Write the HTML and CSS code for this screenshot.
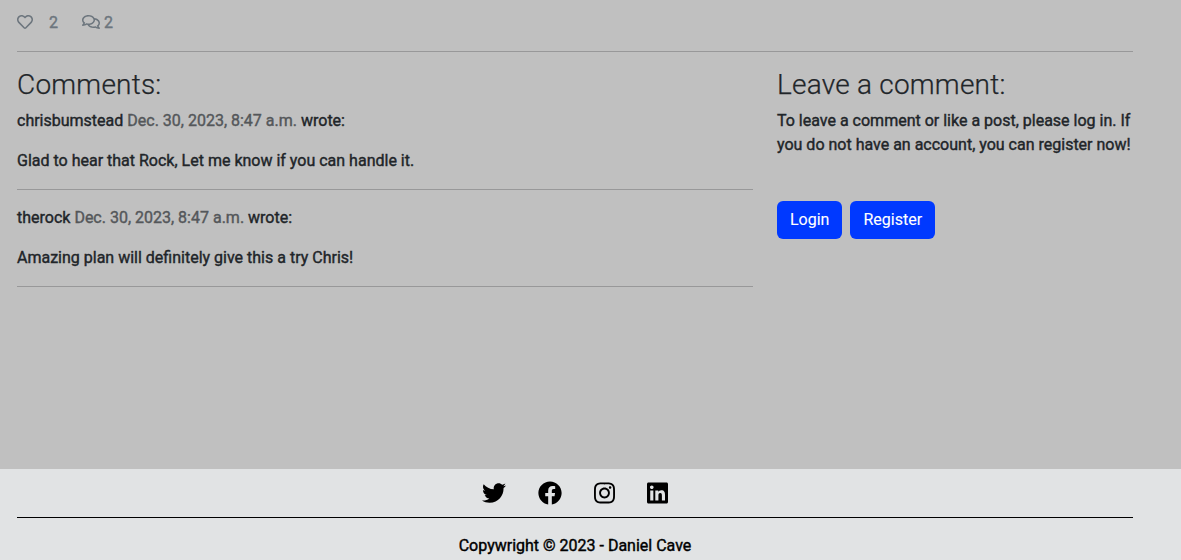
FILE: index.html
```html
<!DOCTYPE html>
<html lang="en">
<head>
<meta charset="utf-8">
<title>Post comments</title>
<link rel="stylesheet" href="styles.css">
</head>
<body>
<main class="content">
  <div class="stats">
    <svg class="icon-heart" viewBox="0 0 512 512"><path d="M458.400 64.300C400.600 15.700 311.300 23 256 79.300 200.700 23 111.400 15.600 53.600 64.300-21.600 127.600-10.600 230.800 43 285.500l175.400 178.700c10 10.200 23.400 15.900 37.600 15.900 14.300 0 27.600-5.600 37.600-15.800L469 285.600c53.500-54.700 64.700-157.900-10.600-221.300zm-23.600 187.500L259.400 430.500c-2.400 2.400-4.400 2.400-6.800 0L77.200 251.800c-36.500-37.200-43.900-107.600 7.300-150.700 38.900-32.700 98.900-27.800 136.500 10.500l35 35.700 35-35.700c37.800-38.500 97.800-43.200 136.500-10.600 51.100 43.100 43.500 113.900 7.300 150.800z"/></svg>
    <span class="count count-likes">2</span>
    <svg class="icon-comments" viewBox="0 0 576 512"><path d="M532 386.200c27.500-27.100 44-61.100 44-98.200 0-80-76.500-146.100-176.200-157.900C368.300 72.500 294.300 32 208 32 93.100 32 0 103.600 0 192c0 37 16.500 71 44 98.200-15.300 30.700-37.300 54.500-37.700 54.900-6.300 6.700-8.100 16.500-4.400 25 3.600 8.500 12 14 21.200 14 53.500 0 96.700-20.200 125.200-38.800 9.200 2.100 18.700 3.700 28.400 4.900C208.100 407.600 281.800 448 368 448c20.800 0 40.800-2.400 59.800-6.800C456.300 459.700 499.400 480 553 480c9.200 0 17.500-5.500 21.200-14 3.600-8.500 1.900-18.300-4.400-25-.4-.3-22.500-24.100-37.800-54.800zm-392.800-92.300L122.100 305c-14.100 9.100-28.500 16.300-43.100 21.400 2.700-4.700 5.400-9.700 8-14.800l15.500-31.100L77.700 256C64.200 242.600 48 220.700 48 192c0-60.700 73.300-112 160-112s160 51.300 160 112-73.300 112-160 112c-16.500 0-33-1.900-49-5.600l-19.800-4.500zM498.300 352l-24.700 24.400 15.500 31.100c2.600 5.100 5.300 10.100 8 14.800-14.600-5.100-29-12.300-43.100-21.400l-17.100-11.100-19.900 4.600c-16 3.700-32.500 5.600-49 5.600-54 0-102.200-20.100-131.300-49.700C338 339.500 416 272.900 416 192c0-3.400-.4-6.700-.7-10C479.700 196.500 528 238.800 528 288c0 28.700-16.200 50.600-29.700 64z"/></svg>
    <span class="count">2</span>
  </div>
  <div class="columns">
    <section>
      <h3>Comments:</h3>
      <article class="comment">
        <p>chrisbumstead <span class="date">Dec. 30, 2023, 8:47 a.m.</span> wrote:</p>
        <p>Glad to hear that Rock, Let me know if you can handle it.</p>
      </article>
      <article class="comment">
        <p>therock <span class="date">Dec. 30, 2023, 8:47 a.m.</span> wrote:</p>
        <p>Amazing plan will definitely give this a try Chris!</p>
      </article>
    </section>
    <section>
      <h3>Leave a comment:</h3>
      <p class="notice">To leave a comment or like a post, please log in. If you do not have an account, you can register now!</p>
      <div class="actions"><a class="btn">Login</a><a class="btn">Register</a></div>
    </section>
  </div>
</main>
<footer class="footer">
  <div class="social">
    <svg class="brand" viewBox="0 0 512 512"><path d="M459.370 151.716c.325 4.548.325 9.097.325 13.645 0 138.720-105.583 298.558-298.558 298.558-59.452 0-114.680-17.219-161.137-47.106 8.447.974 16.568 1.299 25.340 1.299 49.055 0 94.213-16.568 130.274-44.832-46.132-.975-84.792-31.188-98.112-72.772 6.498.974 12.995 1.624 19.818 1.624 9.421 0 18.843-1.300 27.614-3.573-48.081-9.747-84.143-51.980-84.143-102.985v-1.299c13.969 7.797 30.214 12.670 47.431 13.319-28.264-18.843-46.781-51.005-46.781-87.391 0-19.492 5.197-37.360 14.294-52.954 51.655 63.675 129.300 105.258 216.365 109.807-1.624-7.797-2.599-15.918-2.599-24.040 0-57.828 46.782-104.934 104.934-104.934 30.213 0 57.502 12.670 76.670 33.137 23.715-4.548 46.456-13.320 66.599-25.340-7.798 24.366-24.366 44.833-46.132 57.827 21.117-2.273 41.584-8.122 60.426-16.243-14.292 20.791-32.161 39.308-52.628 54.253z"/></svg>
    <svg class="brand" viewBox="0 0 512 512"><path d="M504 256C504 119 393 8 256 8S8 119 8 256c0 123.780 90.690 226.380 209.250 245V327.690h-63V256h63v-54.640c0-62.150 37-96.480 93.670-96.480 27.140 0 55.520 4.840 55.520 4.840v61h-31.280c-30.800 0-40.410 19.120-40.410 38.730V256h68.780l-11 71.690h-57.780V501C413.310 482.380 504 379.780 504 256z"/></svg>
    <svg class="brand narrow" viewBox="0 0 448 512"><path d="M224.100 141c-63.600 0-114.900 51.300-114.900 114.900s51.300 114.900 114.900 114.900S339 319.500 339 255.900 287.700 141 224.100 141zm0 189.600c-41.100 0-74.700-33.500-74.700-74.700s33.500-74.700 74.700-74.700 74.700 33.500 74.700 74.700-33.600 74.700-74.700 74.700zm146.400-194.300c0 14.900-12 26.800-26.800 26.800-14.900 0-26.800-12-26.800-26.800s12-26.800 26.800-26.800 26.800 12 26.800 26.800zm76.100 27.200c-1.700-35.900-9.900-67.700-36.200-93.900-26.200-26.200-58-34.400-93.900-36.200-37-2.100-147.900-2.100-184.900 0-35.800 1.700-67.600 9.900-93.900 36.100s-34.400 58-36.200 93.900c-2.100 37-2.100 147.900 0 184.900 1.700 35.900 9.900 67.700 36.200 93.900s58 34.400 93.900 36.200c37 2.100 147.900 2.100 184.900 0 35.900-1.700 67.700-9.900 93.900-36.200 26.200-26.200 34.400-58 36.200-93.900 2.100-37 2.100-147.800 0-184.800zM398.800 388c-7.800 19.600-22.900 34.700-42.600 42.600-29.500 11.700-99.500 9-132.100 9s-102.700 2.600-132.100-9c-19.600-7.800-34.700-22.900-42.600-42.600-11.700-29.500-9-99.500-9-132.100s-2.600-102.700 9-132.100c7.800-19.600 22.900-34.700 42.600-42.600 29.500-11.700 99.500-9 132.100-9s102.700-2.600 132.100 9c19.600 7.800 34.700 22.900 42.600 42.600 11.700 29.500 9 99.500 9 132.100s2.700 102.700-9 132.100z"/></svg>
    <svg class="brand narrow" viewBox="0 0 448 512"><path d="M416 32H31.900C14.300 32 0 46.500 0 64.300v383.400C0 465.500 14.300 480 31.900 480H416c17.600 0 32-14.500 32-32.300V64.300c0-17.800-14.400-32.300-32-32.300zM135.400 416H69V202.200h66.500V416zm-33.200-243c-21.300 0-38.500-17.300-38.500-38.500S80.900 96 102.200 96c21.200 0 38.500 17.300 38.500 38.500 0 21.300-17.200 38.500-38.500 38.500zm282.100 243h-66.400V312c0-24.800-.5-56.700-34.500-56.700-34.600 0-39.900 27-39.900 54.900V416h-66.400V202.200h63.700v29.200h.9c8.900-16.800 30.600-34.500 62.900-34.500 67.200 0 79.700 44.300 79.700 101.900V416z"/></svg>
  </div>
  <p class="copyright">Copywright © 2023 - Daniel Cave</p>
</footer>
</body>
</html>
```
FILE: styles.css
```css
* { box-sizing: border-box; }
body {
  margin: 0;
  height: 560px;
  overflow: hidden;
  display: flex;
  flex-direction: column;
  background: #c0c0c0;
  color: #212529;
  font: 400 16px/24px Roboto, sans-serif;
  -webkit-text-stroke: 0.4px currentColor;
}
svg { display: block; fill: currentColor; flex: none; }
h3, p { margin: 0; }
.content { height: 469px; flex: none; padding: 0 48px 0 17px; }
.stats {
  height: 52px;
  padding-top: 11px;
  display: flex;
  align-items: flex-start;
  color: #6c757d;
  border-bottom: 1px solid #989899;
}
.icon-heart { width: 16px; height: 16px; margin: 3px 16px 0 0; }
.icon-comments { width: 18px; height: 16px; margin: 3px 4px 0 0; }
.count-likes { width: 33px; }
.columns { display: grid; grid-template-columns: 736px 356px; gap: 24px; padding-top: 16px; }
h3 {
  margin-bottom: 7.4px;
  font-size: 28px;
  font-weight: 300;
  line-height: 33.6px;
  letter-spacing: 0.22px;
  -webkit-text-stroke: 0.25px currentColor;
}
.comment { height: 81px; border-bottom: 1px solid #989899; }
.comment + .comment { margin-top: 16px; }
.comment p + p { margin-top: 16px; }
.date { color: #54575a; }
.notice { margin-right: -4px; }
.actions { display: flex; gap: 8px; margin-top: 44px; }
.btn {
  height: 38px;
  padding: 7px 13px;
  border-radius: 6px;
  background: #0039ff;
  color: #fff;
  -webkit-text-stroke: 0.1px #fff;
}
.footer { flex: 1; padding: 0 48px 0 17px; background: #e1e3e4; color: #000; }
.social {
  height: 49px;
  padding-top: 12px;
  display: flex;
  justify-content: center;
  gap: 32px;
  border-bottom: 1px solid #000;
  -webkit-text-stroke: 0;
}
.brand { width: 24px; height: 24px; }
.brand.narrow { width: 21px; }
.copyright { margin-top: 16px; text-align: center; }
```
